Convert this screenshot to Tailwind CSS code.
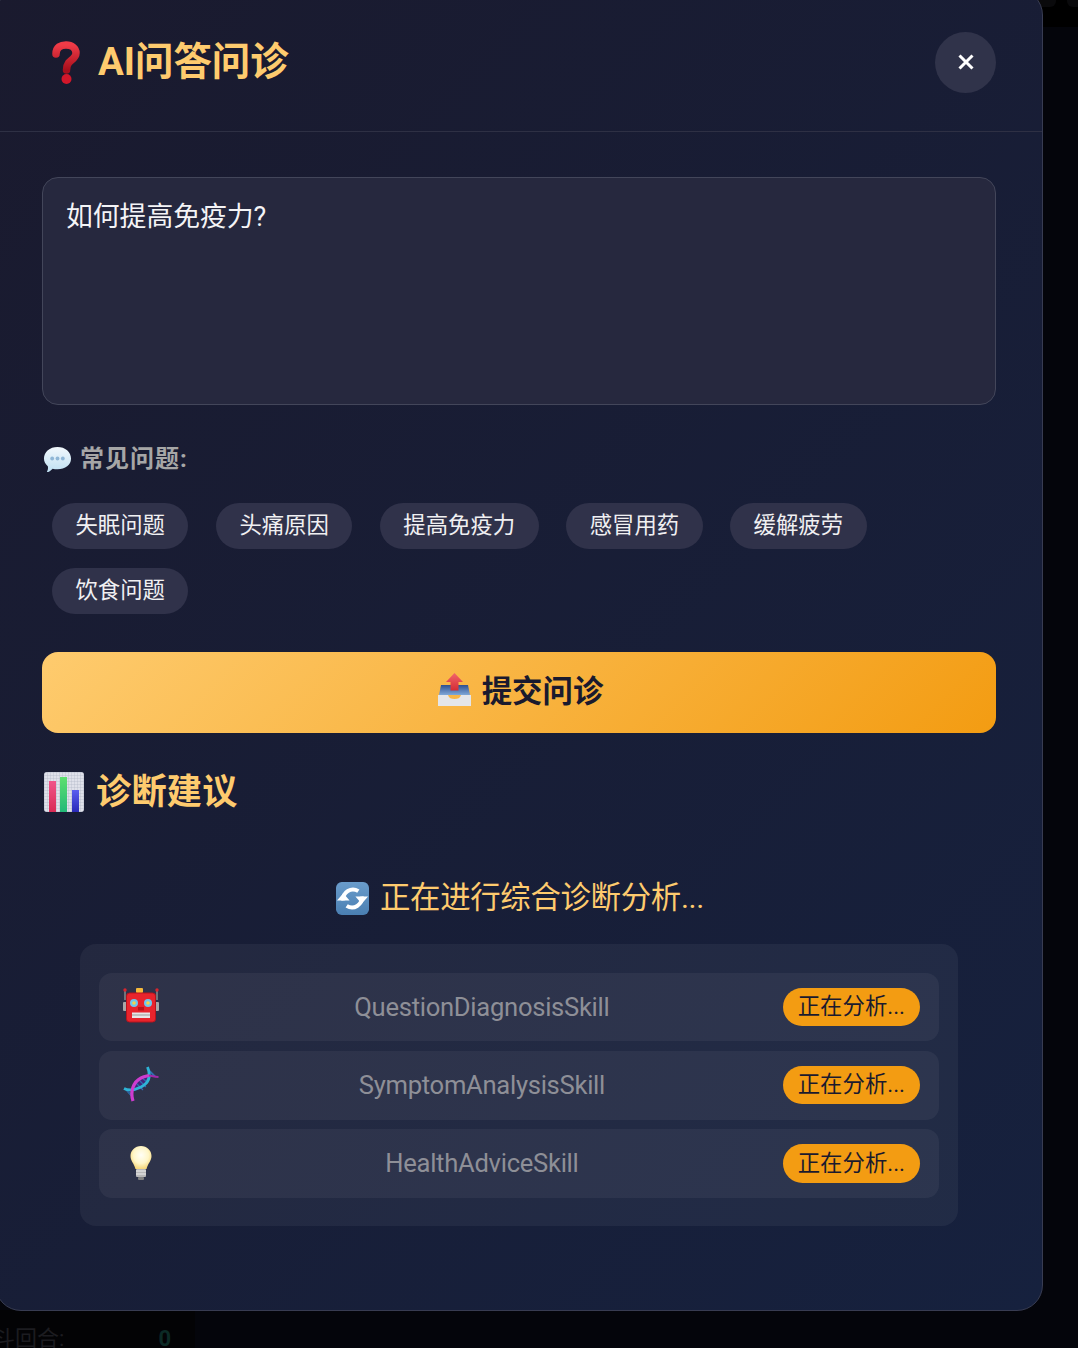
<!DOCTYPE html>
<html lang="zh">
<head>
<meta charset="utf-8">
<title>AI问答问诊</title>
<script src="https://cdn.jsdelivr.net/npm/@tailwindcss/browser@4"></script>
</head>
<body class="bg-[#040409]">
<div class="relative w-[1078px] h-[1348px] overflow-hidden bg-[#04050b] font-[Roboto,'Noto_Sans_CJK_SC',sans-serif]">
  <!-- dimmed page behind the dialog -->
  <div class="flex flex-col justify-between h-full">
    <div class="flex justify-end gap-[11px] h-[27px] mr-[-10px] bg-black">
      <div class="w-[20px] h-[7px] rounded-b-[6px] bg-[#0a0a0c]"></div>
      <div class="w-[21px] h-[7px] rounded-b-[6px] bg-[#0a0a0c]"></div>
    </div>
    <div class="flex w-[195px] h-[38px] bg-[#030305] overflow-hidden">
      <div class="flex justify-between w-[178px] ml-[-7px] shrink-0 h-[38px] pt-[11px] text-[22px] leading-[36px] text-[#1c1c20]">
        <span>斗回合:</span><span class="font-bold text-[#0c2a25]">0</span>
      </div>
    </div>
  </div>

  <!-- dialog -->
  <div class="absolute left-[-5px] top-[-11px] w-[1048px] h-[1322px] rounded-[26px] border border-[#383c52] bg-[linear-gradient(135deg,#1a1a2e_0%,#16213e_100%)]">
    <header class="flex items-center justify-between h-[142px] pl-[46px] pr-[46px] pt-[4px] border-b border-[#2e3044]">
      <h1 class="flex items-center text-[38.4px] font-bold text-[#fecb6e] leading-none">
        <svg class="w-[42px] h-[44px] mr-[11px] ml-[3px] mb-[2px]" viewBox="0 0 42 44">
          <defs><linearGradient id="q" x1="0" y1="0" x2="0" y2="1"><stop offset="0" stop-color="#ef3b47"/><stop offset="1" stop-color="#a80f1c"/></linearGradient></defs>
          <path d="M11 14 C11 7 16 5 21 5 C27 5 31 8.500 31 13 C31 18 26 20 23.500 23 C22 25 21.500 27 21.500 30" fill="none" stroke="url(#q)" stroke-width="7.500" stroke-linecap="round"/>
          <circle cx="21.500" cy="39" r="5" fill="#d3172a"/>
        </svg>
        <span>AI问答问诊</span>
      </h1>
      <button class="flex items-center justify-center w-[61px] h-[61px] pb-[2px] rounded-full bg-[#30334a]">
        <svg class="w-[16px] h-[16px]" viewBox="0 0 16 16"><path d="M1.500 1.500 L14.500 14.500 M14.500 1.500 L1.500 14.500" stroke="#fff" stroke-width="3"/></svg>
      </button>
    </header>

    <main class="px-[46px] pt-[45px]">
      <textarea readonly class="block w-[954px] h-[228px] resize-none rounded-[16px] border border-[#43465a] bg-[#26283e] px-[23px] py-[21px] text-[26.800px] leading-[36px] text-[#f4f4f6] outline-none">如何提高免疫力?</textarea>

      <div class="flex items-center h-[32px] mt-[38px] text-[24px] font-bold text-[#a6a6a6]">
        <svg class="w-[29px] h-[29px] mr-[8px] ml-[1px]" viewBox="0 0 30 30">
          <defs><linearGradient id="b" x1="0" y1="0" x2="0" y2="1"><stop offset="0" stop-color="#f2f8fc"/><stop offset="1" stop-color="#bfe0f3"/></linearGradient></defs>
          <path d="M15 2 C23 2 29 7 29 14 C29 21 23 25 15 25 C13 25 11.500 25 10 24.500 C8 26.500 6 28 4 28 C5 26 5.500 24 5 22 C2.500 20 1 17 1 14 C1 7 7 2 15 2 Z" fill="url(#b)"/>
          <circle cx="9.500" cy="14" r="2" fill="#8fb6d6"/><circle cx="15" cy="14" r="2" fill="#8fb6d6"/><circle cx="20.500" cy="14" r="2" fill="#8fb6d6"/>
        </svg>
        <span class="tracking-[1px]">常见问题:</span>
      </div>

      <div class="flex flex-wrap gap-x-[27.500px] gap-y-[19px] ml-[10px] mt-[28px] text-[22.4px] text-[#f0f0f2]">
        <button class="h-[46px] px-[23.450px] rounded-full bg-[#30324a]">失眠问题</button>
        <button class="h-[46px] px-[23.450px] rounded-full bg-[#30324a]">头痛原因</button>
        <button class="h-[46px] px-[23.450px] rounded-full bg-[#30324a]">提高免疫力</button>
        <button class="h-[46px] px-[23.450px] rounded-full bg-[#30324a]">感冒用药</button>
        <button class="h-[46px] px-[23.450px] rounded-full bg-[#30324a]">缓解疲劳</button>
        <button class="h-[46px] px-[23.450px] rounded-full bg-[#30324a]">饮食问题</button>
      </div>

      <button class="flex items-center justify-center w-[954px] h-[81px] mt-[38px] pb-[1px] rounded-[16px] bg-[linear-gradient(135deg,#fecb6e_0%,#f39c12_100%)] text-[30.4px] font-bold text-[#1a1a2e]">
        <svg class="w-[35px] h-[35px] ml-[2px] mr-[9px] mb-[5px]" viewBox="0 0 35 35">
          <defs><linearGradient id="t" x1="0" y1="0" x2="0" y2="1"><stop offset="0" stop-color="#2f4f8f"/><stop offset="1" stop-color="#7fa8d8"/></linearGradient><linearGradient id="a" x1="0" y1="0" x2="0" y2="1"><stop offset="0" stop-color="#f2666a"/><stop offset="1" stop-color="#d42c34"/></linearGradient></defs>
          <path d="M4 13 H31 L33 23 H2 Z" fill="url(#t)"/>
          <path d="M1 23 H11 C12 26 14 27 17.500 27 C21 27 23 26 24 23 H34 V34 H1 Z" fill="#e4e6ea"/>
          <path d="M17.500 1 L26 10 H21.500 V18.500 H13.500 V10 H9 Z" fill="url(#a)"/>
        </svg>
        <span class="ml-[1px]">提交问诊</span>
      </button>

      <h2 class="flex items-center h-[44px] mt-[37px] text-[35.2px] tracking-[0.2px] font-bold text-[#fecb6e]">
        <svg class="w-[40px] h-[40px] ml-[2px] mr-[12px]" viewBox="0 0 40 40">
          <defs>
            <pattern id="g" width="3" height="3" patternUnits="userSpaceOnUse"><path d="M3 0 H0 V3" fill="none" stroke="#a8acbe" stroke-width=".6"/></pattern>
            <linearGradient id="r" x1="0" y1="0" x2="0" y2="1"><stop offset="0" stop-color="#f0558a"/><stop offset="1" stop-color="#d92a55"/></linearGradient>
            <linearGradient id="gr" x1="0" y1="0" x2="0" y2="1"><stop offset="0" stop-color="#5ee06f"/><stop offset="1" stop-color="#22b878"/></linearGradient>
            <linearGradient id="bl" x1="0" y1="0" x2="0" y2="1"><stop offset="0" stop-color="#5a5ef0"/><stop offset="1" stop-color="#2a2ab8"/></linearGradient>
          </defs>
          <rect width="40" height="40" rx="3" fill="#dfe1ea"/><rect width="40" height="40" rx="3" fill="url(#g)"/>
          <rect x="5" y="9" width="7" height="31" fill="url(#r)"/><rect x="16" y="5" width="7" height="35" fill="url(#gr)"/><rect x="28" y="18" width="7" height="22" fill="url(#bl)"/>
        </svg>
        <span>诊断建议</span>
      </h2>

      <div class="flex items-center justify-center h-[44px] mt-[62px] text-[30.4px] tracking-[-0.3px] text-[#fecb6e]">
        <svg class="w-[33px] h-[33px] ml-[2px] mr-[11px]" viewBox="0 0 34 34">
          <defs><linearGradient id="s" x1="0" y1="0" x2="0" y2="1"><stop offset="0" stop-color="#6a9ccb"/><stop offset="1" stop-color="#4a7fb2"/></linearGradient></defs>
          <rect width="34" height="34" rx="6" fill="url(#s)"/>
          <path d="M7.500 19 A10 10 0 0 1 23 9.500" fill="none" stroke="#fff" stroke-width="4"/>
          <path d="M26.500 15 A10 10 0 0 1 11 24.500" fill="none" stroke="#fff" stroke-width="4"/>
          <path d="M20 15 L33 15 L26.500 22.500 Z M1 19 L14 19 L7.500 11.500 Z" fill="#fff"/>
        </svg>
        <span>正在进行综合诊断分析...</span>
      </div>

      <section class="flex flex-col gap-[9.600px] w-[878px] ml-[38px] mt-[24px] px-[19px] pt-[29px] pb-[28.400px] rounded-[16px] bg-[#ffffff0d]">
        <div class="flex items-center h-[68.470px] px-[24px] rounded-[13px] bg-[#ffffff0d]">
          <svg class="w-[36px] h-[36px] shrink-0 mb-[2px]" viewBox="0 0 36 36">
            <rect x="13" y="0" width="7" height="5" rx="1" fill="#f6b93b"/>
            <path d="M2 2 V12 M34 2 V12" stroke="#8a8a8a" stroke-width="1.500"/>
            <circle cx="2" cy="2" r="1.700" fill="#d7262e"/><circle cx="34" cy="2" r="1.700" fill="#d7262e"/>
            <rect x="0" y="14" width="4" height="9" rx="1" fill="#a8a8a8"/><rect x="32" y="14" width="4" height="9" rx="1" fill="#a8a8a8"/>
            <rect x="3.500" y="5" width="29" height="29" rx="3" fill="#e8242c" stroke="#b8121c"/>
            <circle cx="11" cy="15" r="4" fill="#6fc6ee"/><circle cx="25" cy="15" r="4" fill="#6fc6ee"/>
            <circle cx="11" cy="15" r="1.800" fill="#f4d34a"/><circle cx="25" cy="15" r="1.800" fill="#f4d34a"/>
            <rect x="15" y="19" width="6" height="3.500" fill="#b8121c"/>
            <rect x="9" y="24.500" width="18" height="5.500" fill="#e6e6e6"/><path d="M9 27 H27" stroke="#9a9a9a"/>
          </svg>
          <span class="flex-1 pl-[22px] text-center text-[25.6px] tracking-[-0.28px] text-[#8e8f97]">QuestionDiagnosisSkill</span>
          <span class="flex items-center h-[38.400px] px-[15px] mr-[-5px] rounded-full bg-[#f39c12] text-[22.4px] text-[#1a1a2e]">正在分析...</span>
        </div>
        <div class="flex items-center h-[68.470px] px-[24px] rounded-[13px] bg-[#ffffff0d]">
          <svg class="w-[36px] h-[36px] shrink-0 mb-[3px]" viewBox="0 0 36 36">
            <path d="M10 25 C10 16 16 10 25 10 C27 17 22 24 10 25 Z" fill="#41257c"/>
            <g stroke="#2f6fb0" stroke-width="1.100">
              <path d="M12 16 L20 24 M15 13 L23 21 M18 11 L25 17 M25 3 L33 11 M27 6 L31 10.500 M2 23 L10 32 M4.500 24 L9 29"/>
            </g>
            <path d="M24.500 1 C28 10 26 17 18 21 C12 24 6 25 1 22.500" fill="none" stroke="#2eb4d6" stroke-width="2.800"/>
            <path d="M26 9.500 C29 10 32 11 35.500 11" fill="none" stroke="#a22aa8" stroke-width="2"/>
            <path d="M10 35 C7 26 10 16 18 12 C21 10.500 24 10 26 9.500" fill="none" stroke="#cf3ccf" stroke-width="3.200"/>
          </svg>
          <span class="flex-1 pl-[22px] text-center text-[25.6px] tracking-[-0.28px] text-[#8e8f97]">SymptomAnalysisSkill</span>
          <span class="flex items-center h-[38.400px] px-[15px] mr-[-5px] rounded-full bg-[#f39c12] text-[22.4px] text-[#1a1a2e]">正在分析...</span>
        </div>
        <div class="flex items-center h-[68.470px] px-[24px] rounded-[13px] bg-[#ffffff0d]">
          <svg class="w-[36px] h-[36px] shrink-0" viewBox="0 0 36 36">
            <defs><radialGradient id="l" cx=".5" cy=".4" r=".6"><stop offset="0" stop-color="#fffef6"/><stop offset=".6" stop-color="#fff6c8"/><stop offset="1" stop-color="#f6d77a"/></radialGradient></defs>
            <path d="M18 1 C24 1 28.500 5.500 28.500 11 C28.500 16 25 18 23.500 24 H12.500 C11 18 7.500 16 7.500 11 C7.500 5.500 12 1 18 1 Z" fill="url(#l)"/>
            <rect x="13" y="24" width="10" height="8" rx="1" fill="#b8b8b8"/><path d="M13 26 H23 M13 29 H23" stroke="#eee"/><rect x="15" y="32" width="6" height="3" rx="1" fill="#808080"/>
          </svg>
          <span class="flex-1 pl-[22px] text-center text-[25.6px] tracking-[-0.28px] text-[#8e8f97]">HealthAdviceSkill</span>
          <span class="flex items-center h-[38.400px] px-[15px] mr-[-5px] rounded-full bg-[#f39c12] text-[22.4px] text-[#1a1a2e]">正在分析...</span>
        </div>
      </section>
    </main>
  </div>
</div>
</body>
</html>
